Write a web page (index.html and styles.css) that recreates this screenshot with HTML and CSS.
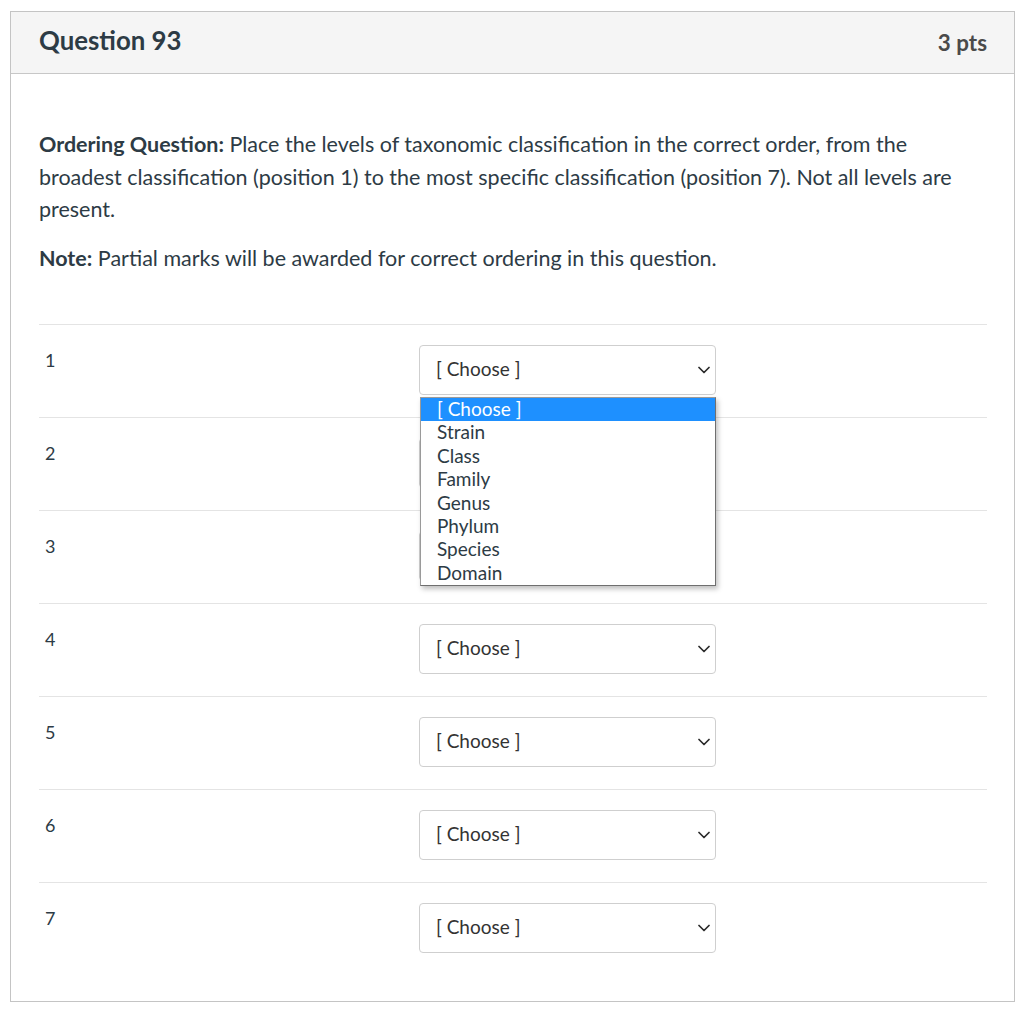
FILE: index.html
```html
<!DOCTYPE html>
<html lang="en">
<head>
<meta charset="utf-8">
<title>Question 93</title>
<link rel="stylesheet" href="styles.css">
</head>
<body>
<div class="question">
  <div class="question-header">
    <h2 class="question-title">Question 93</h2>
    <span class="question-points">3 pts</span>
  </div>
  <div class="question-body">
    <div class="question-text">
      <p><strong>Ordering Question:</strong> Place the levels of taxonomic classification in the correct order, from the broadest classification (position 1) to the most specific classification (position 7). Not all levels are present.</p>
      <p><strong>Note:</strong> Partial marks will be awarded for correct ordering in this question.</p>
    </div>
    <div class="answers">
      <div class="answer-row">
        <div class="answer-label">1</div>
        <div class="select-wrap">
          <select class="answer-select"><option>[ Choose ]</option></select>
          <svg class="chevron" viewBox="0 0 12 8" width="12" height="8"><path d="M1 1.5 L6 6.5 L11 1.5" fill="none" stroke="#2b2b2b" stroke-width="1.7" stroke-linecap="round" stroke-linejoin="round"/></svg>
          <ul class="options-list">
            <li class="option active">[ Choose ]</li>
            <li class="option">Strain</li>
            <li class="option">Class</li>
            <li class="option">Family</li>
            <li class="option">Genus</li>
            <li class="option">Phylum</li>
            <li class="option">Species</li>
            <li class="option">Domain</li>
          </ul>
        </div>
      </div>
      <div class="answer-row">
        <div class="answer-label">2</div>
        <div class="select-wrap">
          <select class="answer-select"><option>[ Choose ]</option></select>
          <svg class="chevron" viewBox="0 0 12 8" width="12" height="8"><path d="M1 1.5 L6 6.5 L11 1.5" fill="none" stroke="#2b2b2b" stroke-width="1.7" stroke-linecap="round" stroke-linejoin="round"/></svg>
        </div>
      </div>
      <div class="answer-row">
        <div class="answer-label">3</div>
        <div class="select-wrap">
          <select class="answer-select"><option>[ Choose ]</option></select>
          <svg class="chevron" viewBox="0 0 12 8" width="12" height="8"><path d="M1 1.5 L6 6.5 L11 1.5" fill="none" stroke="#2b2b2b" stroke-width="1.7" stroke-linecap="round" stroke-linejoin="round"/></svg>
        </div>
      </div>
      <div class="answer-row">
        <div class="answer-label">4</div>
        <div class="select-wrap">
          <select class="answer-select"><option>[ Choose ]</option></select>
          <svg class="chevron" viewBox="0 0 12 8" width="12" height="8"><path d="M1 1.5 L6 6.5 L11 1.5" fill="none" stroke="#2b2b2b" stroke-width="1.7" stroke-linecap="round" stroke-linejoin="round"/></svg>
        </div>
      </div>
      <div class="answer-row">
        <div class="answer-label">5</div>
        <div class="select-wrap">
          <select class="answer-select"><option>[ Choose ]</option></select>
          <svg class="chevron" viewBox="0 0 12 8" width="12" height="8"><path d="M1 1.5 L6 6.5 L11 1.5" fill="none" stroke="#2b2b2b" stroke-width="1.7" stroke-linecap="round" stroke-linejoin="round"/></svg>
        </div>
      </div>
      <div class="answer-row">
        <div class="answer-label">6</div>
        <div class="select-wrap">
          <select class="answer-select"><option>[ Choose ]</option></select>
          <svg class="chevron" viewBox="0 0 12 8" width="12" height="8"><path d="M1 1.5 L6 6.5 L11 1.5" fill="none" stroke="#2b2b2b" stroke-width="1.7" stroke-linecap="round" stroke-linejoin="round"/></svg>
        </div>
      </div>
      <div class="answer-row">
        <div class="answer-label">7</div>
        <div class="select-wrap">
          <select class="answer-select"><option>[ Choose ]</option></select>
          <svg class="chevron" viewBox="0 0 12 8" width="12" height="8"><path d="M1 1.5 L6 6.5 L11 1.5" fill="none" stroke="#2b2b2b" stroke-width="1.7" stroke-linecap="round" stroke-linejoin="round"/></svg>
        </div>
      </div>
    </div>
  </div>
</div>
</body>
</html>
```

FILE: styles.css
```css
* {
  box-sizing: border-box;
}

html, body {
  background: #ffffff;
}

body {
  margin: 11px 9px 0 10px;
  font-family: Lato, "Open Sans", "Liberation Sans", sans-serif;
  color: #2d3b45;
}

/* Card */
.question {
  border: 1px solid #c4c4c4;
  height: 991px;
}

.question-header {
  display: flex;
  justify-content: space-between;
  align-items: center;
  height: 62px;
  padding: 0 27px 0 28px;
  background: #f5f5f5;
  border-bottom: 1px solid #c7c7c7;
}

.question-title {
  margin: 0 0 5px;
  font-size: 25.8px;
  font-weight: 700;
  color: #2d3b45;
}

.question-points {
  font-size: 22.4px;
  font-weight: 700;
  color: #4a4a4a;
}

.question-body {
  padding: 54px 27px 0 28px;
}

.question-text p {
  margin: 0 0 16px;
  font-size: 21.5px;
  line-height: 32.5px;
}

.question-text strong {
  font-weight: 700;
}

/* Answer rows */
.answers {
  margin-top: 50px;
}

.answer-row {
  display: grid;
  grid-template-columns: 380px 297px;
  border-top: 1px solid #e4e4e4;
  padding: 20px 0 22px;
}

.answer-label {
  padding: 4px 0 0 6px;
  font-size: 18px;
  line-height: 22px;
}

.select-wrap {
  position: relative;
}

.answer-select {
  appearance: none;
  -webkit-appearance: none;
  display: block;
  width: 297px;
  height: 50px;
  margin: 0;
  padding: 0 30px 3px 16px;
  border: 1px solid #cfcfcf;
  border-radius: 4px;
  background: #ffffff;
  font-family: Lato, "Open Sans", "Liberation Sans", sans-serif;
  font-size: 19px;
  color: #333333;
}

.chevron {
  position: absolute;
  top: 21px;
  right: 6px;
  pointer-events: none;
}

/* Open dropdown list of the first select */
.options-list {
  position: absolute;
  top: 52px;
  left: 1px;
  width: 296px;
  margin: 0;
  padding: 0;
  list-style: none;
  background: #ffffff;
  border: 1px solid #9a9a9a;
  border-right-color: #6f6f6f;
  border-bottom-color: #6f6f6f;
  box-shadow: 2px 3px 5px rgba(0, 0, 0, 0.25);
  z-index: 5;
}

.option {
  height: 23.4px;
  line-height: 21px;
  padding-left: 16px;
  font-size: 19px;
  color: #2d3b45;
  white-space: nowrap;
}

.option.active {
  background: #1e90ff;
  color: #ffffff;
}
```
